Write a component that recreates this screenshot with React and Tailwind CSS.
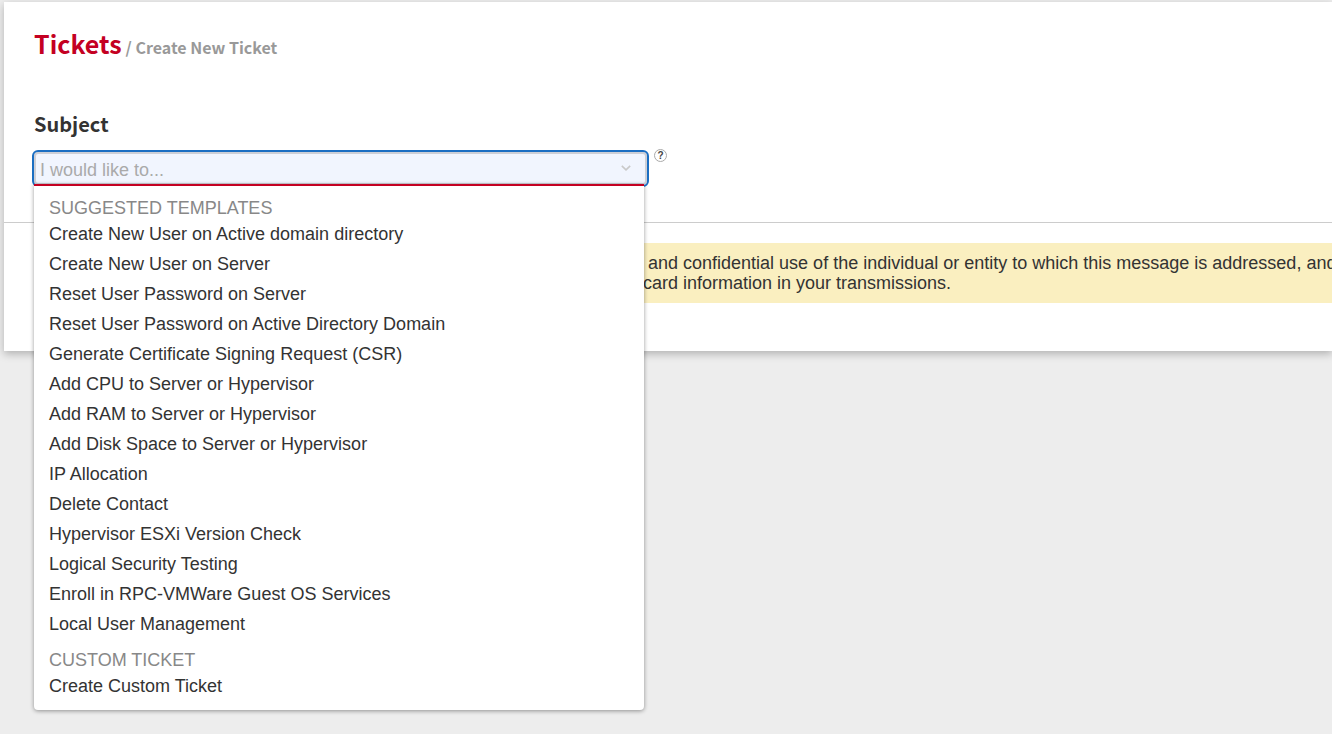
const groups = [
  {
    label: 'SUGGESTED TEMPLATES',
    options: [
      'Create New User on Active domain directory',
      'Create New User on Server',
      'Reset User Password on Server',
      'Reset User Password on Active Directory Domain',
      'Generate Certificate Signing Request (CSR)',
      'Add CPU to Server or Hypervisor',
      'Add RAM to Server or Hypervisor',
      'Add Disk Space to Server or Hypervisor',
      'IP Allocation',
      'Delete Contact',
      'Hypervisor ESXi Version Check',
      'Logical Security Testing',
      'Enroll in RPC-VMWare Guest OS Services',
      'Local User Management',
    ],
  },
  { label: 'CUSTOM TICKET', options: ['Create Custom Ticket'] },
];

function TemplateMenu() {
  return (
    <div
      id="template-menu"
      role="listbox"
      aria-label="Ticket templates"
      className="absolute top-8 left-0 z-10 w-[610px] rounded-b border-t-2 border-[#c40022] bg-white pt-px pb-[9px] shadow-[0_1px_4px_rgba(0,0,0,0.4)]"
    >
      {groups.map((group) => (
        <div key={group.label} role="group" aria-label={group.label} className="px-[15px] pt-2.5">
          <div className="leading-[22px] text-[#888]">{group.label}</div>
          {group.options.map((option) => (
            <div key={option} role="option" aria-selected="false" className="cursor-pointer leading-[30px]">
              {option}
            </div>
          ))}
        </div>
      ))}
    </div>
  );
}

function SubjectField() {
  return (
    <div className="flex items-start gap-[7px]">
      <div className="relative w-[613px]">
        <input
          id="subject"
          type="text"
          role="combobox"
          aria-expanded="true"
          aria-controls="template-menu"
          placeholder="I would like to..."
          className="block h-[33px] w-full rounded-sm border-2 border-[#cdcfd6] bg-[#f1f5fe] pt-1 pr-8 pl-1 text-lg outline-2 outline-[#1b6ec2] placeholder:text-[#aaa]"
        />
        <svg
          aria-hidden="true"
          viewBox="0 0 10 6"
          className="pointer-events-none absolute top-[13px] right-4 h-1.5 w-2.5"
          fill="none"
          stroke="#c9c9c9"
          strokeWidth="1.6"
        >
          <path d="M0.8 0.8 L5 4.8 L9.2 0.8" />
        </svg>
        <TemplateMenu />
      </div>
      <button
        type="button"
        aria-label="Help"
        className="-mt-[3px] flex size-[13px] items-center justify-center rounded-full border border-[#aaa] bg-white text-[10px] leading-none font-bold text-[#444]"
      >
        ?
      </button>
    </div>
  );
}

export default function App() {
  return (
    <div className="min-h-screen overflow-hidden bg-[#ededed] pt-0.5 pl-1 font-['Liberation_Sans',Arial,sans-serif] text-lg text-[#333]">
      <main className="bg-white pb-12 shadow-[0_3px_8px_rgba(0,0,0,0.25)]">
        <header className="flex items-baseline gap-1 px-[30px] pt-[21px] font-['Noto_Sans_CJK_SC',sans-serif] font-bold">
          <h1 className="text-[25px] leading-10 text-[#c40022]">Tickets</h1>
          <p className="text-base text-[#999]">/ Create New Ticket</p>
        </header>
        <section className="border-b border-[#ccc] px-[30px] pt-[45px] pb-[37px]">
          <label
            htmlFor="subject"
            className="mb-3 block font-['Noto_Sans_CJK_SC',sans-serif] text-xl leading-8 font-bold"
          >
            Subject
          </label>
          <SubjectField />
        </section>
        <p className="mt-5 ml-[30px] bg-[#faefc0] py-2.5 pl-[609px] leading-5 whitespace-nowrap">
          &nbsp;and confidential use of the individual or entity to which this message is addressed, and
          <br />
          card information in your transmissions.
        </p>
      </main>
    </div>
  );
}
